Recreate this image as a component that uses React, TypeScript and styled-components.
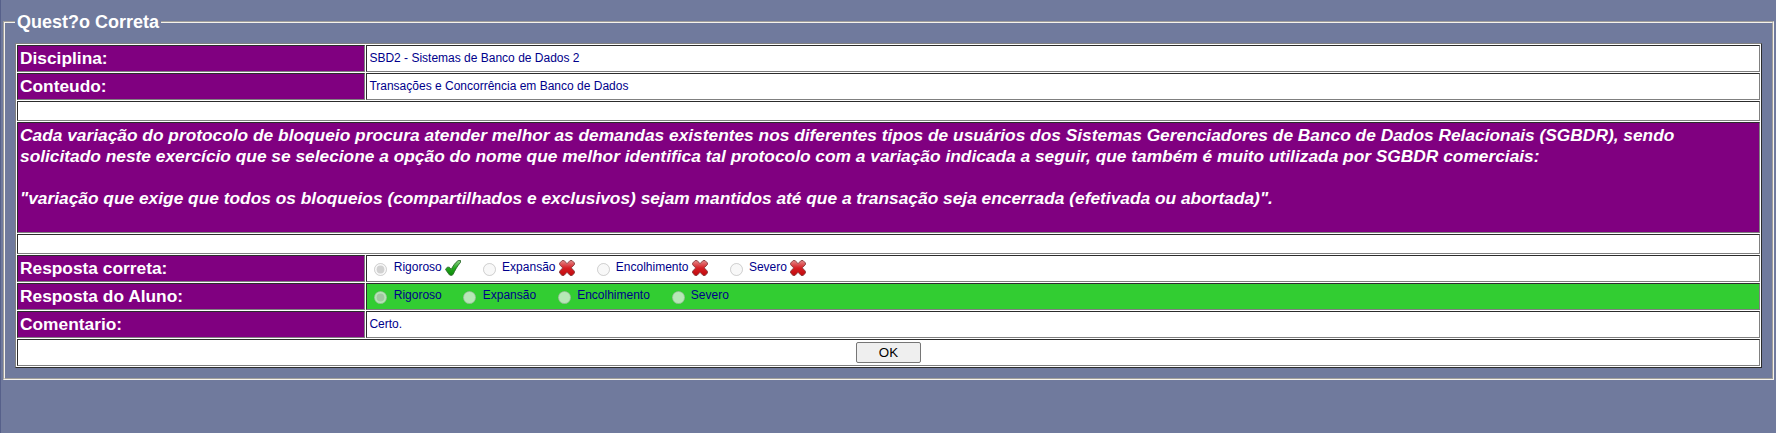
import React from "react";
import styled, { createGlobalStyle } from "styled-components";

const GlobalStyle = createGlobalStyle`
  html { height: 100%; }
  body {
    margin: 0;
    min-height: 100%;
    box-sizing: border-box;
    padding: 11px 2px 0 2px;
    border-left: 1px solid #56608a;
    background: #707a9d;
    font: 12px "Liberation Sans", Arial, sans-serif;
    color: #00008b;
  }
`;

const Panel = styled.fieldset`
  margin: 0;
  padding: 11px 10px 10px 10px;
  border: 2px groove #f0f0f0;
  border-color: #f5f2ec;
  min-width: 0;
`;

const Title = styled.legend`
  padding: 1px 2px 0;
  font-size: 18px;
  line-height: 20px;
  font-weight: bold;
  color: #fff;
`;

const Grid = styled.table`
  width: 1747px;
  table-layout: fixed;
  border-collapse: separate;
  border-spacing: 1px;
  border: 1px solid;
  border-color: #808080 #2c2c2c #2c2c2c #808080;
  background: #fff;
`;

const Row = styled.tr<{ $height?: number }>`
  height: ${(p) => p.$height ?? 27}px;
`;

const Cell = styled.td<{ $correct?: boolean }>`
  box-sizing: border-box;
  padding: 0 2px 2px 2.4px;
  border: 1px solid;
  border-color: #2c2c2c #808080 #808080 #2c2c2c;
  background: ${(p) => (p.$correct ? "#32cd32" : "#fff")};
  line-height: 14px;
  white-space: pre;
`;

const Label = styled(Cell)`
  padding: 0 2px 2px;
  background: #800080;
  color: #fff;
  font-size: 17.33px;
  line-height: 20px;
  font-weight: bold;
`;

const Question = styled(Label)`
  padding-top: 2px;
  vertical-align: top;
  font-style: italic;
  line-height: 21px;
  white-space: normal;
`;

const Centered = styled(Cell)`
  padding: 0 2px;
  text-align: center;
`;

const Radio = styled.input`
  margin: 3px 3px 0 5px;
  vertical-align: middle;
`;

const Mark = styled.svg`
  width: 16px;
  height: 16px;
  vertical-align: middle;
`;

const OkButton = styled.button`
  width: 65px;
  height: 21px;
  padding: 0;
  border: 1px solid #767676;
  border-radius: 2px;
  background: #efefef;
  color: #000;
  font: 13.333px "Liberation Sans", Arial, sans-serif;
  vertical-align: middle;
`;

const Check = () => (
  <Mark viewBox="0 0 16 16">
    <defs>
      <linearGradient id="green" x1="0" y1="0" x2="0" y2="1">
        <stop offset="0" stopColor="#8fd08a" />
        <stop offset="0.5" stopColor="#22a91c" />
        <stop offset="1" stopColor="#0b8a08" />
      </linearGradient>
    </defs>
    <path
      d="M.5 9.400 2.300 7.200 4.300 7.200 6.200 9.400C8 6 10.300 2.500 13.100.6L15.600.5 15.500 2.400C12.400 5.800 10 10.200 8 14.600L6.300 15.500 4.300 14.800Z"
      fill="url(#green)"
      stroke="#2d6a2b"
      strokeWidth="0.9"
    />
  </Mark>
);

const Cross = () => (
  <Mark viewBox="0 0 16 16">
    <defs>
      <linearGradient id="red" x1="0" y1="0" x2="0" y2="1">
        <stop offset="0" stopColor="#e58b8b" />
        <stop offset="0.5" stopColor="#d51f24" />
        <stop offset="1" stopColor="#c2090c" />
      </linearGradient>
    </defs>
    <path
      d="M.5 3.200 3.200.5 5.300.7 8 3.700 10.900.7 13 .5 15.500 3 15.300 4.800 12.200 7.800 15.400 11.200V13.200L13 15.500H11.200L8 12.300 5 15.400H3L.6 13V11.200L3.700 7.900.7 4.800Z"
      fill="url(#red)"
      stroke="#84383a"
      strokeWidth="0.9"
    />
  </Mark>
);

const options = ["Rigoroso", "Expansão", "Encolhimento", "Severo"];
const gap = "\u00a0".repeat(5);

const Options = ({ name, marks }: { name: string; marks?: boolean }) => (
  <>
    {options.map((option, i) => (
      <React.Fragment key={option}>
        <Radio type="radio" name={name} disabled defaultChecked={i === 0} />
        {" " + option}
        {marks && " "}
        {marks && (i === 0 ? <Check /> : <Cross />)}
        {gap}
      </React.Fragment>
    ))}
  </>
);

export default function App() {
  return (
    <>
      <GlobalStyle />
      <Panel>
        <Title>Quest?o Correta</Title>
        <Grid>
          <colgroup>
            <col style={{ width: 348 }} />
            <col />
          </colgroup>
          <tbody>
            <Row>
              <Label>Disciplina:</Label>
              <Cell>SBD2 - Sistemas de Banco de Dados 2</Cell>
            </Row>
            <Row>
              <Label>Conteudo:</Label>
              <Cell>Transações e Concorrência em Banco de Dados</Cell>
            </Row>
            <Row $height={20}>
              <Cell colSpan={2} />
            </Row>
            <Row $height={111}>
              <Question colSpan={2}>
                Cada variação do protocolo de bloqueio procura atender melhor as demandas existentes nos
                diferentes tipos de usuários dos Sistemas Gerenciadores de Banco de Dados Relacionais
                (SGBDR), sendo
                <br />
                solicitado neste exercício que se selecione a opção do nome que melhor identifica tal
                protocolo com a variação indicada a seguir, que também é muito utilizada por SGBDR
                comerciais:
                <br />
                <br />
                "variação que exige que todos os bloqueios (compartilhados e exclusivos) sejam mantidos
                até que a transação seja encerrada (efetivada ou abortada)".
              </Question>
            </Row>
            <Row $height={20}>
              <Cell colSpan={2} />
            </Row>
            <Row>
              <Label>Resposta correta:</Label>
              <Cell>
                <Options name="correta" marks />
              </Cell>
            </Row>
            <Row>
              <Label>Resposta do Aluno:</Label>
              <Cell $correct>
                <Options name="aluno" />
              </Cell>
            </Row>
            <Row>
              <Label>Comentario:</Label>
              <Cell>Certo.</Cell>
            </Row>
            <Row>
              <Centered colSpan={2}>
                <OkButton>OK</OkButton>
              </Centered>
            </Row>
          </tbody>
        </Grid>
      </Panel>
    </>
  );
}
